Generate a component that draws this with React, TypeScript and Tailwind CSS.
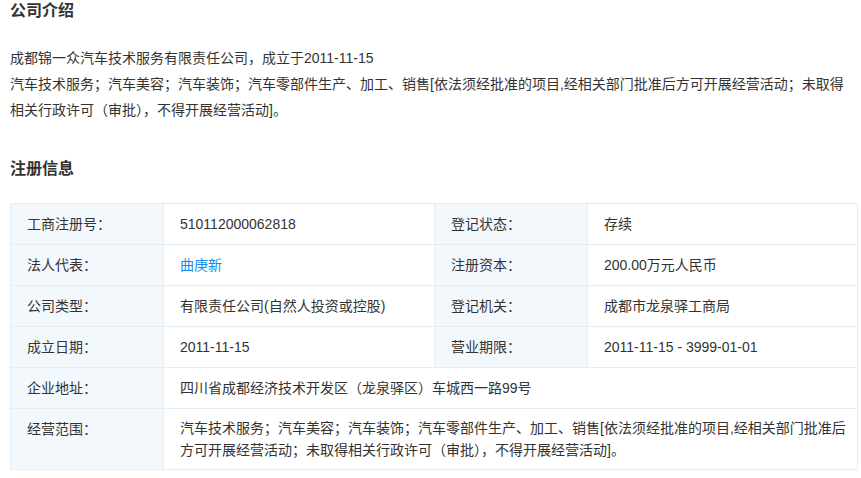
import React from 'react';

const rows: [string, React.ReactNode, string?, string?][] = [
  ['工商注册号：', '510112000062818', '登记状态：', '存续'],
  ['法人代表：', <span className="text-[#128bed]">曲庚新</span>, '注册资本：', '200.00万元人民币'],
  ['公司类型：', '有限责任公司(自然人投资或控股)', '登记机关：', '成都市龙泉驿工商局'],
  ['成立日期：', '2011-11-15', '营业期限：', '2011-11-15 - 3999-01-01'],
];

const label = 'bg-[#f3f8fd] border border-[#e4eef6] pl-4 text-[#333] h-[41px] align-middle';
const value = 'border border-[#e4eef6] pl-4 text-[#333] align-middle';

export default function App() {
  return (
    <div className="w-[861px] h-[478px] overflow-hidden bg-white text-[14px] text-[#333]" style={{ fontFamily: '"Liberation Sans", "Noto Sans CJK SC", sans-serif' }}>
      <h3 className="font-bold text-[16px] leading-[20px] pl-[10px] pt-[1px]">公司介绍</h3>
      <div className="px-[10px] mt-[24px] leading-[26px]">
        <p>成都锦一众汽车技术服务有限责任公司，成立于2011-11-15</p>
        <p>汽车技术服务；汽车美容；汽车装饰；汽车零部件生产、加工、销售[依法须经批准的项目,经相关部门批准后方可开展经营活动；未取得相关行政许可（审批），不得开展经营活动]。</p>
      </div>
      <h3 className="font-bold text-[16px] leading-[20px] pl-[10px] mt-[36px]">注册信息</h3>
      <table className="ml-[10px] mt-[24px] w-[848px] border-collapse">
        <colgroup>
          <col className="w-[153px]" />
          <col className="w-[271px]" />
          <col className="w-[153px]" />
          <col />
        </colgroup>
        <tbody>
          {rows.map((r, i) => (
            <tr key={i}>
              <td className={label}>{r[0]}</td>
              <td className={value}>{r[1]}</td>
              <td className={label}>{r[2]}</td>
              <td className={value}>{r[3]}</td>
            </tr>
          ))}
          <tr>
            <td className={label}>企业地址：</td>
            <td className={value} colSpan={3}>四川省成都经济技术开发区（龙泉驿区）车城西一路99号</td>
          </tr>
          <tr>
            <td className="bg-[#f3f8fd] border border-[#e4eef6] pl-4 align-top pt-[10px]">经营范围：</td>
            <td className="border border-[#e4eef6] pl-4 pr-2 py-[8px] leading-[22px]" colSpan={3}>
              汽车技术服务；汽车美容；汽车装饰；汽车零部件生产、加工、销售[依法须经批准的项目,经相关部门批准后方可开展经营活动；未取得相关行政许可（审批），不得开展经营活动]。
            </td>
          </tr>
        </tbody>
      </table>
    </div>
  );
}
